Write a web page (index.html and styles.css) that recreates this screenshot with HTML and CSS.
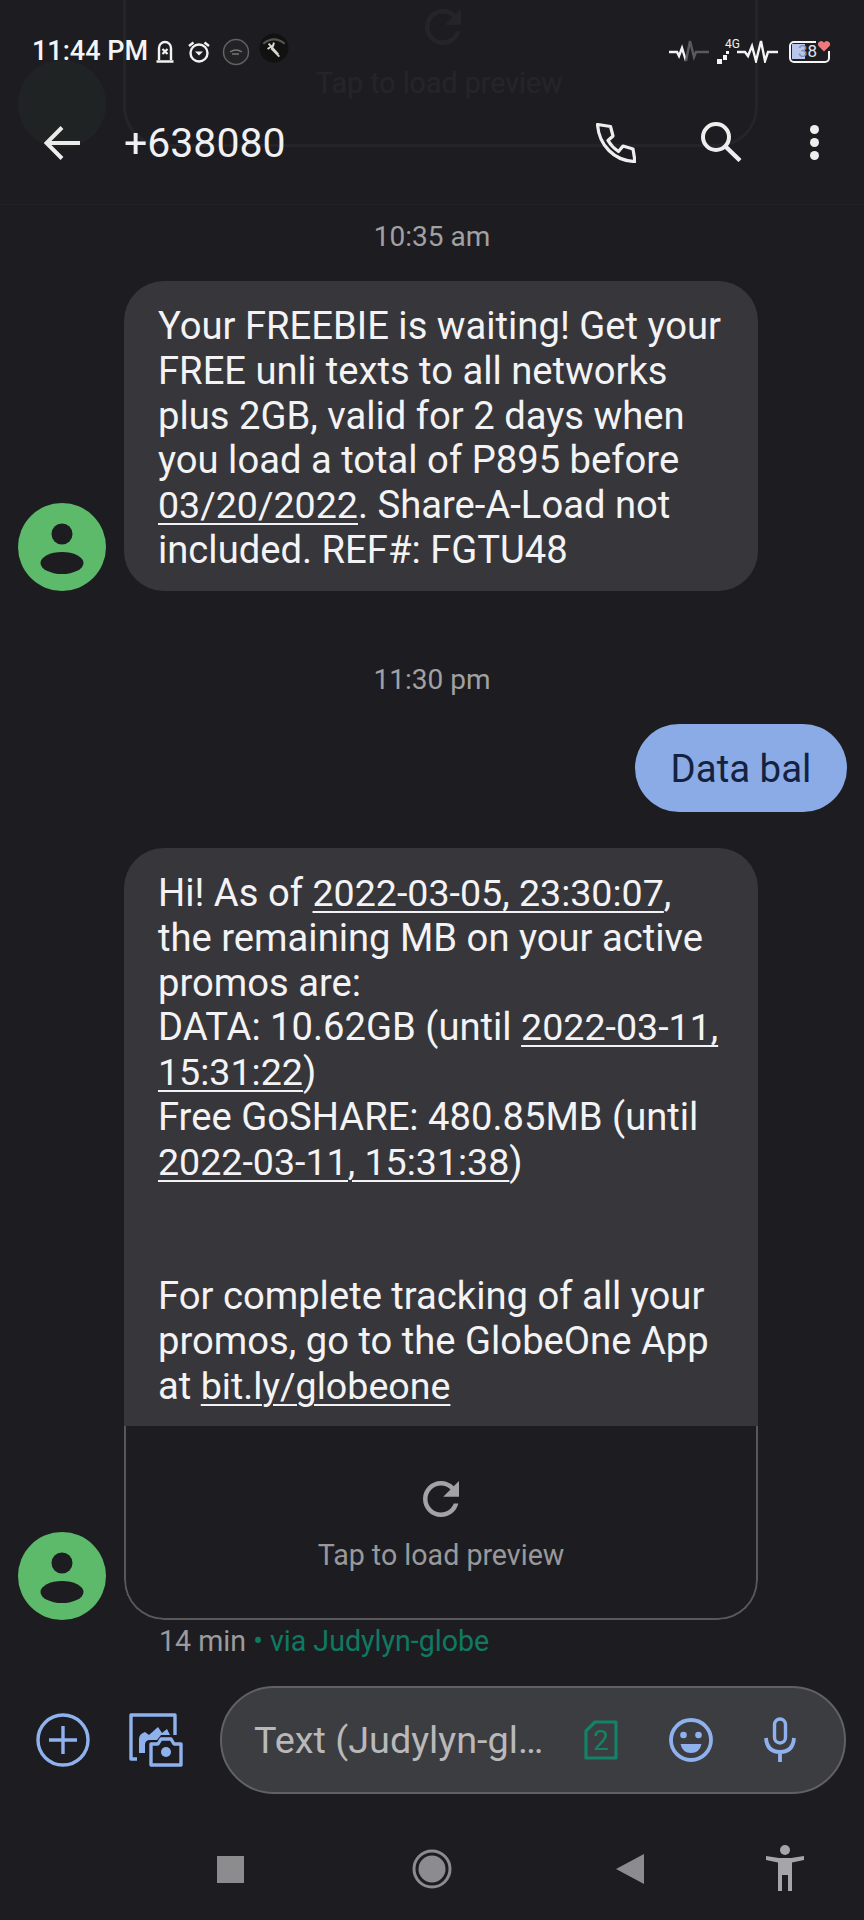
FILE: index.html
```html
<!DOCTYPE html>
<html lang="en">
<head>
<meta charset="utf-8">
<title>+638080</title>
<link rel="stylesheet" href="styles.css">
</head>
<body>
<div class="screen">
  <div class="ghost" aria-hidden="true">
    <div class="ghost-avatar"></div>
    <div class="ghost-card">
      <svg class="ghost-refresh" viewBox="0 0 24 24"><path d="M17.65 6.35C16.2 4.9 14.21 4 12 4c-4.42 0-7.99 3.58-7.99 8s3.57 8 7.99 8c3.73 0 6.84-2.55 7.73-6h-2.08c-.82 2.33-3.04 4-5.65 4-3.31 0-6-2.69-6-6s2.69-6 6-6c1.66 0 3.14.69 4.22 1.78L13 11h7V4l-2.35 2.35z"/></svg>
      <span class="ghost-text">Tap to load preview</span>
    </div>
  </div>

  <div class="status">
    <span class="clock">11:44 PM</span>
    <svg class="st-icon st-bell" viewBox="0 0 20 24"><path d="M4 20V8a6 6 0 0 1 12 0v12M1.500 21.500h17" fill="none" stroke="#f2f2f2" stroke-width="2.400"/><path d="M7.500 9l5 5m0-5l-5 5" stroke="#f2f2f2" stroke-width="2.200"/></svg>
    <svg class="st-icon st-alarm" viewBox="0 0 24 24"><circle cx="12" cy="13" r="8.500" fill="none" stroke="#f2f2f2" stroke-width="2.400"/><path d="M2 6l4.500-3.500M22 6l-4.500-3.500" stroke="#f2f2f2" stroke-width="2.400"/><path d="M8 11.500l4 4 4-4z" fill="#f2f2f2"/></svg>
    <svg class="st-dot st-dot-a" viewBox="0 0 28 28"><circle cx="14" cy="14" r="12.500" fill="#232325" stroke="#626265" stroke-width="1.500"/><path d="M8 14q6-4 12 0M10 16h7" fill="none" stroke="#77777a" stroke-width="1.500"/></svg>
    <svg class="st-dot st-dot-b" viewBox="0 0 28 28"><circle cx="14" cy="14" r="13.500" fill="#111111"/><path d="M4 10q10-8 20 0" fill="none" stroke="#55554f" stroke-width="2"/><path d="M9 10l9 10M14 9l-2 6 7 7M8 15l6-4" fill="none" stroke="#d8d8cc" stroke-width="1.800"/></svg>
    <div class="status-right">
      <svg class="st-wave" viewBox="0 0 42 24"><path d="M1 13h8l2 4 3-8 4 13" fill="none" stroke="#f4f4f4" stroke-width="2.400"/><path d="M18 22l4-20 4 16 2-5h13" fill="none" stroke="#5a5a5c" stroke-width="2.400"/></svg>
      <div class="st-net">
        <span class="st-4g">4G</span>
        <svg class="st-arrows" viewBox="0 0 12 14"><path d="M0 9h5v5H0zM6 5h4v5H6zM9 1h3v3H9z" fill="#f4f4f4"/></svg>
      </div>
      <svg class="st-wave st-wave-b" viewBox="0 0 42 24"><path d="M1 13h8l3 4 4-10 4 15 5-20 4 20 3-9h11" fill="none" stroke="#f4f4f4" stroke-width="2.400"/></svg>
      <div class="battery">
        <span class="battery-fill"></span>
        <span class="battery-notch"></span>
        <span class="battery-num"><span class="battery-three">3</span>8</span>
        <svg class="battery-heart" viewBox="0 0 14 13"><path d="M7 12.500L1 6.500a3.400 3.400 0 0 1 6-3.500 3.400 3.400 0 0 1 6 3.500z" fill="#ec7a7d"/></svg>
      </div>
    </div>
  </div>

  <header class="appbar">
    <svg class="back" viewBox="0 0 36 34"><path d="M36 17H3M18 1.500L2.500 17 18 32.500" fill="none" stroke="#eeeeee" stroke-width="4"/></svg>
    <h1 class="title">+638080</h1>
    <div class="actions">
      <svg class="act-phone" viewBox="0 0 40 40"><path d="M1.500 1.500L14.500 3.500 17 13l-5 4.500C15 22.500 18 25.500 22.500 28.500L27 23l10 3 2 12.500C18 38 3 22 1.500 1.500z" fill="none" stroke="#eeeeee" stroke-width="3.200" stroke-linejoin="round"/></svg>
      <svg class="act-search" viewBox="0 0 42 40"><circle cx="15" cy="15" r="13" fill="none" stroke="#eeeeee" stroke-width="4"/><path d="M24.500 24.500L39 38.500" stroke="#eeeeee" stroke-width="4.400"/></svg>
      <div class="act-more"><i></i><i></i><i></i></div>
    </div>
  </header>

  <main class="thread">
    <div class="stamp stamp-first">10:35 am</div>
    <div class="row row-first">
      <svg class="avatar" viewBox="0 0 88 88"><circle cx="44" cy="44" r="44" fill="#5dba6a"/><circle cx="44" cy="31" r="10.500" fill="#1d1d21"/><ellipse cx="44" cy="60" rx="21.500" ry="11" fill="#1d1d21"/></svg>
      <div class="bubble bubble-in">Your FREEBIE is waiting! Get your<br>FREE unli texts to all networks<br>plus 2GB, valid for 2 days when<br>you load a total of P895 before<br><a>03/20/2022</a>. Share-A-Load not<br>included. REF#: FGTU48</div>
    </div>
    <div class="stamp stamp-second">11:30 pm</div>
    <div class="row row-out">
      <div class="bubble-out">Data bal</div>
    </div>
    <div class="row row-last">
      <svg class="avatar" viewBox="0 0 88 88"><circle cx="44" cy="44" r="44" fill="#5dba6a"/><circle cx="44" cy="31" r="10.500" fill="#1d1d21"/><ellipse cx="44" cy="60" rx="21.500" ry="11" fill="#1d1d21"/></svg>
      <div class="card">
        <div class="card-body">Hi! As of <a>2022-03-05, 23:30:07</a>,<br>the remaining MB on your active<br>promos are:<br>DATA: 10.62GB (until <a>2022-03-11,</a><br><a>15:31:22</a>)<br>Free GoSHARE: 480.85MB (until<br><a>2022-03-11, 15:31:38</a>)<br><br><br>For complete tracking of all your<br>promos, go to the GlobeOne App<br>at <a>bit.ly/globeone</a></div>
        <div class="preview">
          <svg class="refresh" viewBox="0 0 24 24"><path d="M17.650 6.350C16.200 4.900 14.210 4 12 4c-4.420 0-7.990 3.580-7.990 8s3.570 8 7.990 8c3.730 0 6.840-2.550 7.730-6h-2.080c-.82 2.330-3.040 4-5.650 4-3.310 0-6-2.690-6-6s2.690-6 6-6c1.660 0 3.140.69 4.220 1.780L13 11h7V4l-2.350 2.350z" fill="#a3a3a6"/></svg>
          <span class="preview-text">Tap to load preview</span>
        </div>
      </div>
    </div>
    <div class="meta">14 min <span class="via"><span class="via-dot">•</span> via Judylyn-globe</span></div>
  </main>

  <div class="composer">
    <svg class="plus" viewBox="0 0 54 54"><circle cx="27" cy="27" r="25" fill="none" stroke="#8fb2ee" stroke-width="3.400"/><path d="M27 13v28M13 27h28" stroke="#8fb2ee" stroke-width="3.400"/></svg>
    <svg class="gallery" viewBox="0 0 54 54"><path d="M8 46H2V2h44v20" fill="none" stroke="#8fb2ee" stroke-width="3.400" stroke-linejoin="round"/><path d="M10 40V26q0-5 6-7l4 3 9-8 4 6 5-4 3 6h-9l-4 5h-7q-5 0-5 5v8z" fill="#8fb2ee"/><path d="M22 52V31h7l3-5h10l3 5h7v21z" fill="#1d1d21" stroke="#8fb2ee" stroke-width="3.400" stroke-linejoin="round"/><circle cx="37" cy="39" r="5" fill="#8fb2ee"/></svg>
    <div class="field">
      <span class="field-text">Text (Judylyn-gl…</span>
      <div class="sim">
        <svg viewBox="0 0 34 40"><path d="M11 2h21v36H2V11z" fill="none" stroke="#138268" stroke-width="3.200" stroke-linejoin="round"/></svg>
        <span class="sim-num">2</span>
      </div>
      <svg class="emoji" viewBox="0 0 44 44"><circle cx="22" cy="22" r="20" fill="none" stroke="#8fb2ee" stroke-width="3.800"/><circle cx="14.500" cy="17" r="3.300" fill="#8fb2ee"/><circle cx="29.500" cy="17" r="3.300" fill="#8fb2ee"/><path d="M11.500 26h21q-2 9-10.500 9t-10.500-9z" fill="#8fb2ee"/></svg>
      <svg class="mic" viewBox="0 0 32 46"><rect x="10.500" y="2" width="11" height="24" rx="5.500" fill="none" stroke="#8fb2ee" stroke-width="3.400"/><path d="M2 21q1 14 14 14t14-14M16 35v10" fill="none" stroke="#8fb2ee" stroke-width="3.800"/></svg>
    </div>
  </div>

  <nav class="navbar">
    <span class="nav-square"></span>
    <svg class="nav-home" viewBox="0 0 40 40"><circle cx="20" cy="20" r="18" fill="none" stroke="#8c8c8e" stroke-width="3"/><circle cx="20" cy="20" r="13.500" fill="#8c8c8e"/></svg>
    <svg class="nav-back" viewBox="0 0 28 30"><path d="M28 0v30L0 15z" fill="#8c8c8e"/></svg>
    <svg class="nav-a11y" viewBox="0 0 40 46"><circle cx="20" cy="5" r="5" fill="#a6a6a8"/><path d="M1 11l13 2h12l13-2v4l-12 2.500V46h-4V30h-6v16h-4V17.500L1 15z" fill="#a6a6a8"/></svg>
  </nav>
</div>
</body>
</html>
```
FILE: styles.css
```css
* { box-sizing: border-box; }
html, body { margin: 0; padding: 0; background: #1d1d21; }
body { font-family: Roboto, "Liberation Sans", sans-serif; }
svg { display: block; flex: none; }

.screen {
  position: relative;
  width: 864px;
  height: 1920px;
  overflow: hidden;
  display: flex;
  flex-direction: column;
  background: #1d1d21;
  color: #f1f1f3;
}

/* faint content that scrolled under the translucent app bar */
.ghost { position: absolute; left: 0; top: 0; width: 864px; height: 150px; opacity: .035; }
.ghost-avatar { position: absolute; left: 18px; top: 60px; width: 88px; height: 88px; border-radius: 50%; background: #5dba6a; }
.ghost-card {
  position: absolute; left: 123px; top: -60px; width: 635px; height: 207px;
  border: 3px solid #ffffff; border-top: 0; border-radius: 0 0 40px 40px;
}
.ghost-refresh { position: absolute; left: 290px; top: 60px; width: 54px; height: 54px; fill: #ffffff; }
.ghost-text { position: absolute; left: 190px; top: 126px; font-size: 28.600px; color: #ffffff; white-space: nowrap; }

/* status bar */
.status {
  position: relative;
  height: 100px;
  padding: 33px 34px 0 32px;
  display: flex;
  align-items: flex-start;
}
.clock { width: 114px; font-size: 27px; line-height: 36px; font-weight: 500; color: #f4f4f4; white-space: nowrap; }
.st-icon { margin-top: 7px; }
.st-bell { width: 20px; height: 24px; margin-left: 9px; }
.st-alarm { width: 24px; height: 24px; margin-left: 12px; }
.st-dot { width: 28px; height: 28px; margin-top: 5px; }
.st-dot-a { margin-left: 11px; }
.st-dot-b { margin-left: 9px; margin-top: 0; width: 30px; height: 30px; }
.status-right { margin-left: auto; display: flex; align-items: flex-start; }
.st-wave { width: 42px; height: 24px; margin-top: 6px; }
.st-wave-b { margin-left: -5px; }
.st-net { position: relative; width: 24px; height: 30px; margin-left: 7px; }
.st-4g { position: absolute; left: 8px; top: 4px; font-size: 12px; line-height: 14px; color: #f0f0f0; }
.st-arrows { position: absolute; left: 0; top: 17px; width: 12px; height: 14px; }
.battery {
  position: relative;
  width: 41px;
  height: 22px;
  margin-left: 11px;
  margin-top: 8px;
  border: 2.500px solid #f4f4f4;
  border-radius: 5px;
}
.battery-fill { position: absolute; left: 1px; top: 1px; width: 13px; height: 15px; background: #b7c6ea; }
.battery-num { position: absolute; left: 7px; top: -1px; font-size: 17px; line-height: 19px; color: #dfe3f0; }
.battery-three { color: #7f8db8; }
.battery-notch { position: absolute; right: -3px; top: -3px; width: 15px; height: 11px; background: #1d1d21; }
.battery-heart { position: absolute; right: -3px; top: -3px; width: 14px; height: 12px; }

/* app bar */
.appbar {
  height: 105px;
  padding: 0 42px 19px 44px;
  display: flex;
  align-items: center;
  border-bottom: 1px solid #222226;
}
.back { width: 36px; height: 34px; }
.title { margin: 0 0 0 44px; font-size: 41px; line-height: 48px; font-weight: 400; color: #f1f1f3; }
.actions { margin-left: auto; display: flex; align-items: center; }
.act-phone { width: 40px; height: 40px; }
.act-search { width: 42px; height: 40px; margin-left: 65px; margin-top: -2px; }
.act-more { margin-left: 67px; width: 12px; display: flex; flex-direction: column; gap: 4px; }
.act-more i { display: block; width: 9px; height: 9px; border-radius: 50%; background: #eeeeee; }

/* thread */
.thread { display: flex; flex-direction: column; }
.stamp { text-align: center; font-size: 28px; line-height: 36px; color: #a1a1a4; }
.stamp-first { margin-top: 14px; }
.stamp-second { margin-top: 71px; }
.row { display: flex; align-items: flex-end; margin-top: 27px; padding-left: 18px; }
.row-first { margin-top: 26px; }
.avatar { width: 88px; height: 88px; }
.bubble {
  margin-left: 18px;
  width: 634px;
  height: 310px;
  padding: 23px 34px;
  border-radius: 40px;
  background: #37373b;
  font-size: 38.200px;
  line-height: 44.800px;
  color: #f3f3f5;
  white-space: nowrap;
}
.bubble a, .card-body a { font-size: 37.600px; text-decoration: underline; text-underline-offset: 5px; text-decoration-thickness: 2px; }
.row-out { justify-content: flex-end; padding-right: 17px; margin-top: 26px; }
.bubble-out {
  width: 212px;
  height: 88px;
  border-radius: 44px;
  background: #8aabe6;
  color: #14223f;
  font-size: 38.400px;
  line-height: 90px;
  text-align: center;
}
.row-last { margin-top: 36px; }
.card {
  margin-left: 18px;
  width: 634px;
  border-radius: 40px;
  overflow: hidden;
}
.card-body {
  height: 578px;
  padding: 23px 34px 0;
  background: #37373b;
  font-size: 38.200px;
  line-height: 44.800px;
  color: #f3f3f5;
  white-space: nowrap;
}
.preview {
  height: 194px;
  display: flex;
  flex-direction: column;
  align-items: center;
  border: 2px solid #58585b;
  border-top: 0;
  border-radius: 0 0 40px 40px;
  padding-top: 46px;
}
.refresh { width: 54px; height: 54px; }
.preview-text { margin-top: 11px; font-size: 28.600px; line-height: 36px; color: #99999c; }
.meta { margin: 5px 0 0 159px; font-size: 28.600px; line-height: 32px; color: #9b9b9e; }
.via { color: #0f7a62; }
.via-dot { color: #0f7a62; }

/* composer */
.composer {
  margin-top: 29px;
  padding: 0 18px 0 36px;
  display: flex;
  align-items: center;
}
.plus { width: 54px; height: 54px; }
.gallery { width: 54px; height: 54px; margin-left: 39px; }
.field {
  position: relative;
  margin-left: 37px;
  flex: 1;
  height: 108px;
  border: 2px solid #616164;
  border-radius: 54px;
  background: #3c3d40;
  padding: 0 0 0 32px;
  display: flex;
  align-items: center;
}
.field-text { width: 311px; font-size: 37.800px; color: #b9b9bb; white-space: nowrap; }
.sim { position: relative; margin-left: 19px; width: 34px; height: 40px; }
.sim-num { position: absolute; left: 0; top: 0; width: 34px; text-align: center; font-size: 28px; line-height: 42px; color: #138268; }
.emoji { width: 44px; height: 44px; margin-left: 51px; }
.mic { width: 32px; height: 46px; margin-left: 51px; }

/* navigation bar */
.navbar { position: relative; height: 70px; margin-top: 40px; padding-left: 217px; display: flex; align-items: center; }
.nav-square { width: 27px; height: 27px; background: #8c8c8e; }
.nav-home { width: 40px; height: 40px; margin-left: 168px; }
.nav-back { width: 28px; height: 30px; margin-left: 164px; }
.nav-a11y { width: 40px; height: 46px; margin-left: 121px; margin-top: -2px; }
```
